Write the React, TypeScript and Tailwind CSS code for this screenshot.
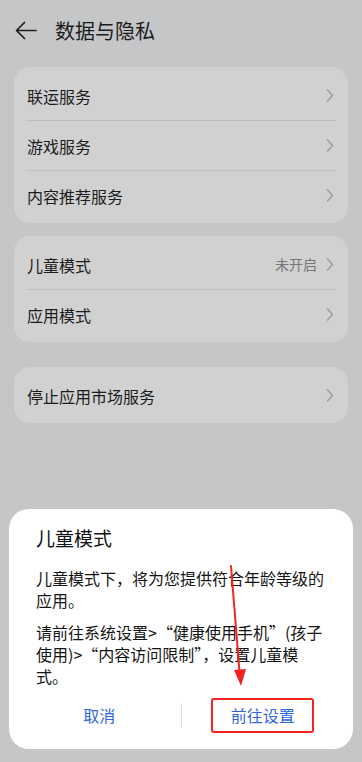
import { ReactNode } from "react";

const font = {
  fontFamily: '"Noto Sans CJK SC", "Noto Sans", sans-serif',
};

function Chevron() {
  return (
    <svg width="8" height="13" viewBox="0 0 8 13" fill="none">
      <path d="M1.5 1 L6.5 6.5 L1.5 12" stroke="#9b9b9b" strokeWidth="1.4" strokeLinecap="round" strokeLinejoin="round" />
    </svg>
  );
}

function Row({ label, value }: { label: string; value?: string }) {
  return (
    <div className="flex h-[49px] items-center justify-between pl-[13px] pr-[14px]">
      <span className="text-[16px] text-[#1c1c1c]">{label}</span>
      <div className="flex items-center gap-[9px]">
        {value && <span className="text-[14px] text-[#777777]">{value}</span>}
        <Chevron />
      </div>
    </div>
  );
}

function Divider() {
  return <div className="mx-[12px] h-px bg-[#bfbfbf]" />;
}

function Card({ children }: { children: ReactNode }) {
  return (
    <div className="rounded-[16px] bg-[#d1d1d1] pt-[4px] pb-[3px]">{children}</div>
  );
}

export default function App() {
  return (
    <div className="relative h-[762px] w-[362px] overflow-hidden bg-[#c5c6c8]" style={font}>
      {/* HEADER */}
      <div className="flex h-[67px] items-center pl-[15px] pb-[6px]">
        <svg width="22" height="19" viewBox="0 0 22 19" fill="none">
          <path d="M21 9.5 H2 M9.5 1.5 L1.5 9.5 L9.5 17.5" stroke="#1e1e1e" strokeWidth="1.7" strokeLinecap="round" strokeLinejoin="round" />
        </svg>
        <span className="ml-[18px] text-[20px] text-[#1c1c1c]">数据与隐私</span>
      </div>

      {/* LIST */}
      <div className="flex flex-col px-[14px]">
        <Card>
          <Row label="联运服务" />
          <Divider />
          <Row label="游戏服务" />
          <Divider />
          <Row label="内容推荐服务" />
        </Card>

        <div className="mt-[13px]">
          <Card>
            <Row label="儿童模式" value="未开启" />
            <Divider />
            <Row label="应用模式" />
          </Card>
        </div>

        <div className="mt-[25px]">
          <Card>
            <Row label="停止应用市场服务" />
          </Card>
        </div>
      </div>

      {/* DIALOG */}
      <div className="absolute left-[9px] top-[509px] w-[344px] rounded-[20px] bg-white pt-[16px] pb-[16px]">
        <div className="px-[27px]">
          <h3 className="text-[19px] leading-[26px] text-[#111111]">儿童模式</h3>
          <p className="mt-[16px] text-[16px] leading-[22px] text-[#141414]">
            儿童模式下，将为您提供符合年龄等级的应用。
          </p>
          <p className="mt-[10px] text-[16px] leading-[22px] text-[#141414]">
            请前往系统设置&gt;“健康使用手机”(孩子使用)&gt;“内容访问限制”，设置儿童模式。
          </p>
        </div>

        <div className="mt-[10px] flex items-center px-[9px]">
          <div className="flex h-[36px] flex-1 items-center justify-center text-[16px] text-[#2f66dc]">
            取消
          </div>
          <div className="h-[25px] w-px bg-[#dddddd]" />
          <div className="flex h-[36px] flex-1 items-center justify-center">
            <div className="flex h-[35px] w-[103px] items-center justify-center rounded-[3px] border-2 border-[#f5221f] text-[16px] text-[#2f66dc]">
              前往设置
            </div>
          </div>
        </div>
      </div>

      {/* ANNOTATION ARROW */}
      <svg className="absolute left-0 top-0" width="362" height="762" viewBox="0 0 362 762" fill="none">
        <path d="M231 566 L239.5 672" stroke="#f5221f" strokeWidth="2" strokeLinecap="round" />
        <path d="M234 670 L246 669 L241 686 Z" fill="#f5221f" />
      </svg>
    </div>
  );
}
